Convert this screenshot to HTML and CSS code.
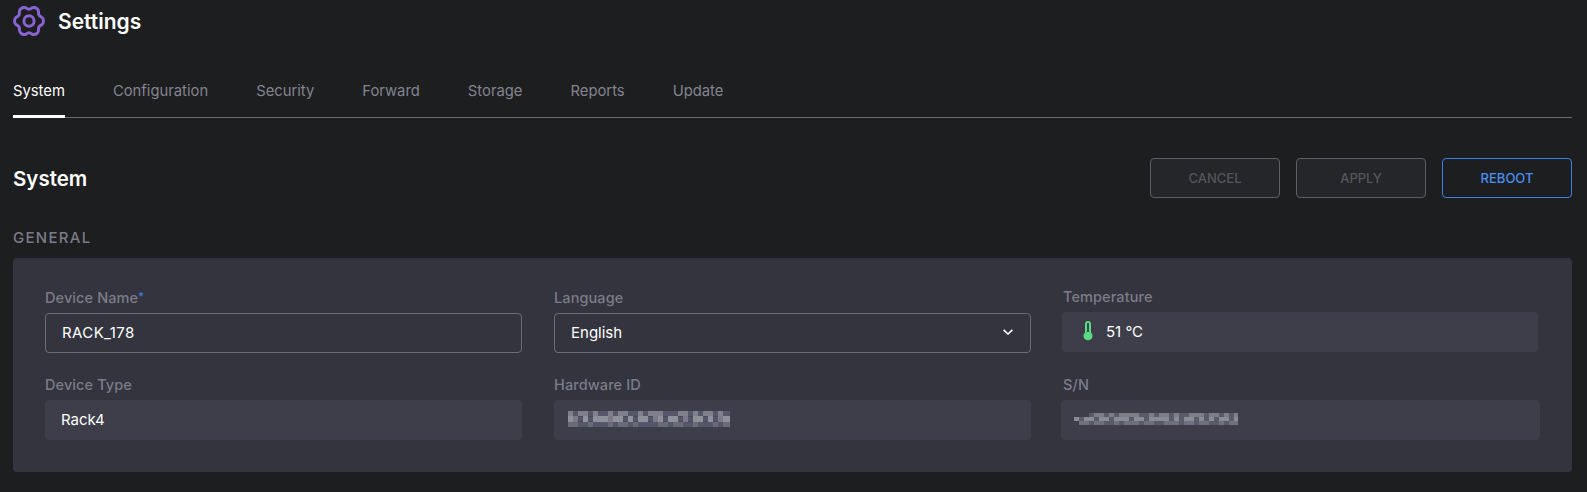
FILE: index.html
```html
<!DOCTYPE html>
<html lang="en">
<head>
    <meta charset="UTF-8">
    <title>Settings</title>
    <link rel="stylesheet" href="styles.css">
</head>
<body>
    <header class="page-title">
        <svg class="gear" viewBox="-17.6 -16.15 35.2 32.3" preserveAspectRatio="none" fill="none" stroke="#8a63d2" stroke-width="3.2">
            <path d="M13.78 -4.26A5.2 5.2 0 0 1 13.78 4.26A5 5 0 0 0 10.58 9.8A5.2 5.2 0 0 1 3.2 14.06A5 5 0 0 0 -3.2 14.06A5.2 5.2 0 0 1 -10.58 9.8A5 5 0 0 0 -13.78 4.26A5.2 5.2 0 0 1 -13.78 -4.26A5 5 0 0 0 -10.58 -9.8A5.2 5.2 0 0 1 -3.2 -14.06A5 5 0 0 0 3.2 -14.06A5.2 5.2 0 0 1 10.58 -9.8A5 5 0 0 0 13.78 -4.26Z"/>
            <circle cx="0" cy="0" r="5.6"/>
        </svg>
        <h1>Settings</h1>
    </header>

    <nav class="tabs">
        <a class="tab active">System</a>
        <a class="tab">Configuration</a>
        <a class="tab">Security</a>
        <a class="tab">Forward</a>
        <a class="tab">Storage</a>
        <a class="tab">Reports</a>
        <a class="tab">Update</a>
    </nav>

    <div class="section-head">
        <h2>System</h2>
        <div class="actions">
            <button class="btn" disabled>CANCEL</button>
            <button class="btn" disabled>APPLY</button>
            <button class="btn primary">REBOOT</button>
        </div>
    </div>

    <h3 class="group-title">GENERAL</h3>
    <section class="panel">
        <div class="field">
            <label>Device Name<span class="req">*</span></label>
            <input class="control name-input" type="text" value="RACK_178">
        </div>
        <div class="field">
            <label>Language</label>
            <div class="control select">
                <span>English</span>
                <svg class="chevron" viewBox="0 0 10 6" fill="none" stroke="#fff" stroke-width="1.6">
                    <path d="M.6 .8L5 5L9.4 .8"/>
                </svg>
            </div>
        </div>
        <div class="field temp">
            <label>Temperature</label>
            <div class="readonly temp-value">
                <svg class="thermo" viewBox="0 0 10 20" fill="#5cdb85">
                    <path d="M2 3a3 3 0 0 1 6 0V11.5a4.5 4.5 0 1 1-6 0Z"/>
                    <rect x="4" y="2" width="2" height="9" fill="#3d4a4a"/>
                </svg>
                <span>51 °C</span>
            </div>
        </div>
        <div class="field">
            <label>Device Type</label>
            <div class="readonly">Rack4</div>
        </div>
        <div class="field">
            <label>Hardware ID</label>
            <div class="readonly">
                <svg class="blur" width="162" height="16" fill="none" stroke-width="5">
                    <path d="M0 2.5h162M0 8h162M0 13.5h162" stroke="#55566a"/>
                    <path d="M0 2.5h162" stroke="#7f808c" stroke-dasharray="5 5 10 5 5 10 5 5 10 10 5 5 15 15 10 5"/>
                    <path d="M0 8h162" stroke="#8e909a" stroke-width="6" stroke-dasharray="10 5 5 5 15 5 10 5 5 5 10 10 5 5 10 5 5 5"/>
                    <path d="M5 8h150" stroke="#7f788a" stroke-width="6" stroke-dasharray="5 30 5 40 5 25"/>
                    <path d="M0 13.5h162" stroke="#6a6b78" stroke-dasharray="10 10 5 15 5 5 10 5 5 20 10 5"/>
                </svg>
            </div>
        </div>
        <div class="field serial">
            <label>S/N</label>
            <div class="readonly">
                <svg class="blur" width="164" height="12" fill="none" stroke-width="4">
                    <path d="M15 2h149M0 6h164M5 10h159" stroke="#5a5b68"/>
                    <path d="M20 2h144" stroke="#7c7d87" stroke-dasharray="10 5 5 5 20 10 5 5 10 5 5 10 15 5"/>
                    <path d="M0 6h164" stroke="#8a8b95" stroke-dasharray="5 5 10 5 10 5 15 5 10 5 20 5 5 5 10 5 5 5"/>
                    <path d="M5 10h159" stroke="#707180" stroke-dasharray="10 5 10 10 5 5 15 5 10 10 15 5"/>
                </svg>
            </div>
        </div>
    </section>
</body>
</html>
```

FILE: styles.css
```css
* {
    box-sizing: border-box;
}
body {
    margin: 0;
    padding: 6px 15px 0 13px;
    background-color: #1d1e20;
    color: #fff;
    font-family: Inter, "Liberation Sans", sans-serif;
}
.page-title {
    display: flex;
    align-items: center;
    gap: 13px;
    height: 30px;
}
.gear {
    width: 32px;
    height: 30px;
}
h1 {
    margin: 0;
    font-size: 21px;
    font-weight: 600;
}
.tabs {
    display: flex;
    gap: 48px;
    margin-top: 45px;
    border-bottom: 1px solid #6b6c7a;
}
.tab {
    padding-bottom: 14px;
    border-bottom: 3px solid transparent;
    margin-bottom: -1px;
    font-size: 14.8px;
    line-height: 20px;
    color: #83848f;
}
.tab.active {
    color: #fff;
    border-bottom-color: #fff;
}
.section-head {
    display: flex;
    justify-content: space-between;
    align-items: center;
    margin-top: 40px;
}
h2 {
    margin: 0;
    font-size: 20.5px;
    font-weight: 600;
}
.actions {
    display: flex;
    gap: 16px;
}
.btn {
    width: 130px;
    height: 40px;
    border: 1px solid #5c5d62;
    border-radius: 4px;
    background-color: #25262a;
    color: #55565d;
    font-family: inherit;
    font-size: 13px;
    font-weight: 500;
}
.btn.primary {
    border-color: #3a80e6;
    background-color: transparent;
    color: #4a8ff2;
}
.group-title {
    margin: 32px 0 12px;
    font-size: 15px;
    line-height: 16px;
    font-weight: 500;
    letter-spacing: 1.3px;
    color: #7b7c88;
}
.panel {
    display: grid;
    grid-template-columns: repeat(3, 477px);
    gap: 24px 32px;
    padding: 32px;
    border-radius: 4px;
    background-color: #33343d;
}
.field label {
    display: block;
    margin-bottom: 7px;
    font-size: 14.5px;
    line-height: 16px;
    font-weight: 500;
    letter-spacing: .1px;
    color: #7b7c88;
}
.req {
    display: inline-block;
    vertical-align: top;
    font-size: 11px;
    line-height: 12px;
    color: #3a80e6;
}
.control, .readonly {
    display: flex;
    align-items: center;
    width: 100%;
    height: 40px;
    border-radius: 4px;
    color: #fff;
    font-family: inherit;
    font-size: 15px;
}
.control {
    padding: 0 16px 2px;
    border: 1px solid #6b6c7a;
    background-color: #33343d;
}
.name-input {
    letter-spacing: .4px;
}
.readonly {
    padding: 0 14px 2px 16px;
    background-color: #3d3e49;
}
.select {
    justify-content: space-between;
}
.chevron {
    width: 10px;
    height: 6px;
    margin-right: 1px;
}
.temp {
    margin-top: -1px;
}
.temp-value {
    width: 476px;
    margin-left: -1px;
    padding-left: 21px;
    gap: 13px;
}
.thermo {
    width: 10px;
    height: 20px;
}
.blur {
    display: block;
    margin-left: -2px;
    filter: blur(.5px);
}
.serial .readonly {
    width: 479px;
    margin-left: -2px;
}
.serial .blur {
    margin-left: -3px;
}
```
